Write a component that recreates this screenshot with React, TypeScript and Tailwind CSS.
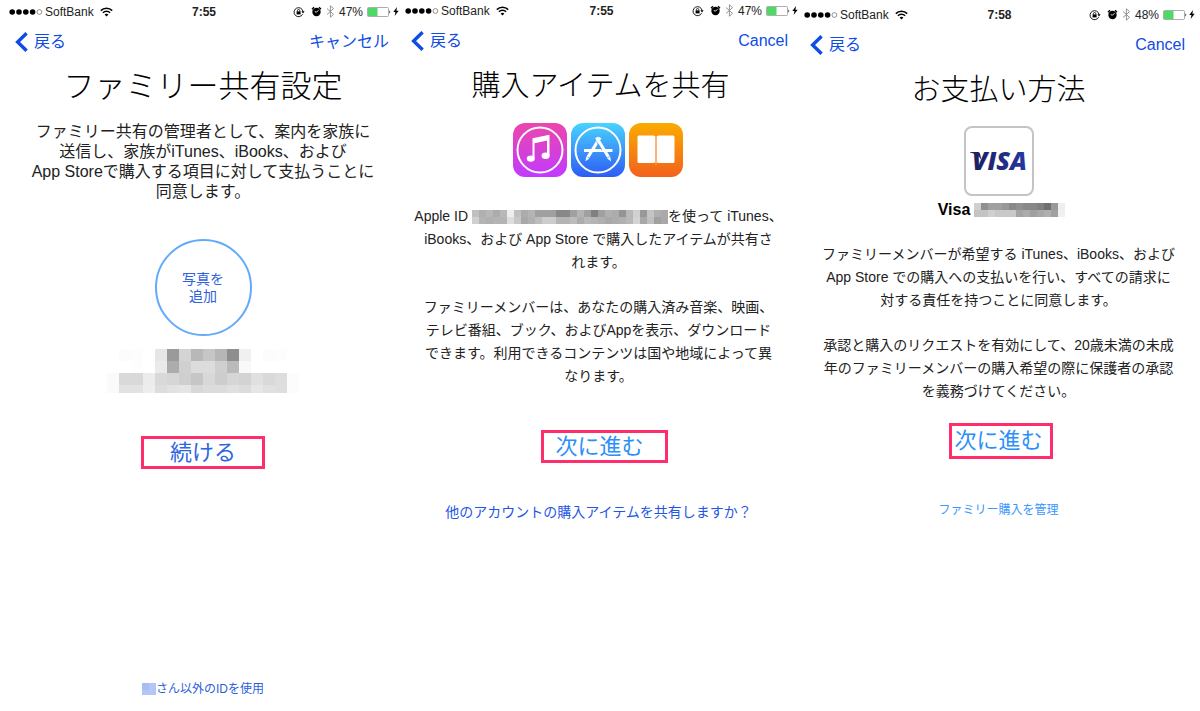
import type { ReactNode } from 'react';
import clsx from 'clsx';

type ScreenProps = {
  time: string;
  battery: string;
  cancelLabel: string;
  title: string;
  titleClass: string;
  className?: string;
  children: ReactNode;
};

type MosaicProps = {
  rows: string[];
  cell: number;
  height?: number;
  className?: string;
};

// Each row is a list of two-digit grey levels
const nameMosaic = [
  'ff fc fd ff e6 9a d4 b8 c6 b6 8e f0 ff fc fd ff',
  'ff ff fd ff ea ac d0 dc dc cf ba f9 ff ff ff ff',
  'fa d9 d9 ec d9 d6 cf c6 d8 cd d6 d3 e0 d9 dd fc',
  'fa e2 e2 ee dd e2 e5 d8 dc dc e0 dc e6 e0 de fc',
];

const idMosaic = [
  'c0 b0 b8 ac b8 ee c0 ac b4 a0 a0 a0 88 88 a0 b4 a0 80 a0 b0 ac 94 b8 d0 98 c4 b0 aa',
  'd0 b4 b0 b4 b4 de c8 a8 b0 bc cc cc b4 b4 bc ac b8 b4 b0 a8 ac b0 b8 d4 a8 c0 a0 a8',
];

const cardMosaic = [
  'd0 90 a0 a0 98 88 90 88 88 80 70 98 ee',
  'c4 c4 d0 c8 c8 c8 a4 ac a0 a8 b0 a0 f0',
];

function Mosaic({ rows, cell, height = rows.length * cell, className }: MosaicProps) {
  const width = rows[0].split(' ').length * cell;
  return (
    <svg
      width={width}
      height={height}
      viewBox={`0 0 ${width} ${height}`}
      shapeRendering="crispEdges"
      className={className}
      aria-hidden="true"
    >
      {rows.map((row, y) =>
        row.split(' ').map((grey, x) => (
          <rect
            key={`${x}-${y}`}
            x={x * cell}
            y={y * cell}
            width={cell}
            height={cell}
            fill={`#${grey}${grey}${grey}`}
          />
        ))
      )}
    </svg>
  );
}

function SignalDots() {
  return (
    <svg width="34" height="8" viewBox="0 0 34 8" aria-hidden="true">
      <circle cx="3.2" cy="4" r="2.8" />
      <circle cx="10" cy="4" r="2.8" />
      <circle cx="16.8" cy="4" r="2.8" />
      <circle cx="23.6" cy="4" r="2.8" />
      <circle cx="30.4" cy="4" r="2.4" fill="none" stroke="#666" strokeWidth="0.7" />
    </svg>
  );
}

function WifiIcon() {
  return (
    <svg width="13" height="10" viewBox="0 0 13 10" fill="none" stroke="#000" strokeWidth="1.5" aria-hidden="true">
      <path d="M0.8 3.6a8 8 0 0 1 11.4 0" />
      <path d="M2.9 5.8a5.1 5.1 0 0 1 7.2 0" />
      <path d="M6.5 9.6 4.6 7.6a2.7 2.7 0 0 1 3.8 0z" fill="#000" stroke="none" />
    </svg>
  );
}

function LockIcon() {
  return (
    <svg width="12" height="12" viewBox="0 0 12 12" fill="none" stroke="#000" aria-hidden="true">
      <path d="M9.6 8.2A4.5 4.5 0 1 1 10 5.4" strokeWidth="0.9" />
      <path d="M8.4 5.2h3.2L10 7.4z" fill="#000" stroke="none" />
      <rect x="3.6" y="5.4" width="4" height="3" fill="#000" stroke="none" />
      <path d="M4.4 5.6V4.7a1.2 1.2 0 0 1 2.4 0v0.9" strokeWidth="0.8" />
    </svg>
  );
}

function AlarmIcon() {
  return (
    <svg width="11" height="11" viewBox="0 0 11 11" aria-hidden="true">
      <circle cx="5.5" cy="6" r="4.2" />
      <path d="M1 3.2 3 1.300M10 3.200 8 1.300" stroke="#000" strokeWidth="1.4" />
      <path d="M5.500 6.200 7.500 4.200M5.500 6.200 3.800 5.600" stroke="#fff" strokeWidth="0.9" />
    </svg>
  );
}

function BluetoothIcon() {
  return (
    <svg width="9" height="13" viewBox="0 0 9 13" fill="none" stroke="#888" strokeWidth="0.9" aria-hidden="true">
      <path d="M1 3.5 7.5 9.4 4.4 12.2V0.8L7.5 3.6 1 9.5" />
    </svg>
  );
}

function BatteryIcon() {
  return (
    <svg width="24" height="10" viewBox="0 0 24 10" aria-hidden="true">
      <rect x="0.5" y="0.5" width="21" height="9" rx="1" fill="#fff" stroke="#999" strokeWidth="0.8" />
      <rect x="1" y="1" width="9.5" height="8" fill="#4cd964" />
      <path d="M22.3 3.6a1.5 1.5 0 0 1 0 2.8z" fill="#333" />
    </svg>
  );
}

function BoltIcon() {
  return (
    <svg width="6" height="9" viewBox="0 0 6 9" aria-hidden="true">
      <path d="M4 0 0.3 5h2.2L1.6 9 5.7 3.8H3.4z" />
    </svg>
  );
}

function StatusBar({ time, battery }: { time: string; battery: string }) {
  return (
    <div className="grid h-[21px] grid-cols-[1fr_auto_1fr] items-center pr-0.5 pl-1 text-[12px] leading-5 text-[#222]">
      <div className="flex items-center">
        <SignalDots />
        <span className="ml-0.5">SoftBank</span>
        <span className="ml-1.5">
          <WifiIcon />
        </span>
      </div>
      <span className="font-bold">{time}</span>
      <div className="flex items-center justify-end">
        <LockIcon />
        <span className="ml-1.5">
          <AlarmIcon />
        </span>
        <span className="ml-1">
          <BluetoothIcon />
        </span>
        <span className="ml-1">{battery}</span>
        <span className="ml-1">
          <BatteryIcon />
        </span>
        <span className="ml-0.5">
          <BoltIcon />
        </span>
      </div>
    </div>
  );
}

function Screen({ time, battery, cancelLabel, title, titleClass, className, children }: ScreenProps) {
  return (
    <section className={clsx('flex flex-col', className)}>
      <StatusBar time={time} battery={battery} />
      <nav className="flex h-10 items-center justify-between pr-3 pl-2.5 text-base text-[#0f4ce4]">
        <button type="button" className="flex items-center gap-1.5">
          <svg width="13" height="20" viewBox="0 0 13 20" fill="none" stroke="#0f4ce4" strokeWidth="3.4" aria-hidden="true">
            <path d="M11.6 1.200 2.600 10l9 8.800" />
          </svg>
          戻る
        </button>
        <button type="button">{cancelLabel}</button>
      </nav>
      <h1 className={clsx('text-center leading-[50px] font-light text-black', titleClass)}>{title}</h1>
      {children}
    </section>
  );
}

function MusicAppIcon() {
  return (
    <svg width="54" height="54" viewBox="0 0 54 54" role="img" aria-label="iTunes">
      <defs>
        <linearGradient id="music" x1="0" y1="0" x2="0" y2="1">
          <stop offset="0" stopColor="#ec46ab" />
          <stop offset="1" stopColor="#c23aff" />
        </linearGradient>
      </defs>
      <rect width="54" height="54" rx="12" fill="url(#music)" />
      <circle cx="27" cy="27" r="22.5" fill="none" stroke="#fff" strokeWidth="2" />
      <path d="M19.500 15.300 36.500 11.800V17L21.500 20.200V35h-2zM34 16h2.500v16.500H34z" fill="#fff" />
      <ellipse cx="17.800" cy="35.600" rx="4" ry="3.200" fill="#fff" />
      <ellipse cx="32.600" cy="32.800" rx="4" ry="3.200" fill="#fff" />
    </svg>
  );
}

function StoreAppIcon() {
  return (
    <svg width="54" height="54" viewBox="0 0 54 54" role="img" aria-label="App Store">
      <defs>
        <linearGradient id="store" x1="0" y1="0" x2="0" y2="1">
          <stop offset="0" stopColor="#48d3ff" />
          <stop offset="1" stopColor="#2d5cf4" />
        </linearGradient>
      </defs>
      <rect width="54" height="54" rx="12" fill="url(#store)" />
      <circle cx="27" cy="27" r="22.5" fill="none" stroke="#fff" strokeWidth="2" />
      <g stroke="#fff" fill="none">
        <path d="M13 27.500h28.500" strokeWidth="3" />
        <path d="M29 14.500 17 34" strokeWidth="3.200" />
        <path d="M25.500 14.500 37.500 34" strokeWidth="3.200" />
      </g>
      <path d="M15.300 33.600 18.400 35.400 14.400 38.200zM36.100 35.400 39.200 33.600 40 38.200z" fill="#fff" />
      <path d="M25.400 18.400 31 27.500" stroke="#3f9bfa" strokeWidth="0.7" />
    </svg>
  );
}

function BooksAppIcon() {
  return (
    <svg width="54" height="54" viewBox="0 0 54 54" role="img" aria-label="iBooks">
      <defs>
        <linearGradient id="books" x1="0" y1="0" x2="0" y2="1">
          <stop offset="0" stopColor="#fbab00" />
          <stop offset="1" stopColor="#f2611d" />
        </linearGradient>
      </defs>
      <rect width="54" height="54" rx="12" fill="url(#books)" />
      <path d="M26 13h2v26.500L27 42l-1-2.500z" fill="#fdb27a" />
      <rect x="8.500" y="12.500" width="17.500" height="27.500" rx="1.500" fill="#fff" />
      <rect x="28" y="12.500" width="17.500" height="27.500" rx="1.500" fill="#fff" />
    </svg>
  );
}

function VisaCard() {
  return (
    <div className="mx-auto mt-[11px] flex size-[70px] items-center justify-center rounded-lg border-2 border-[#c4c4c4]">
      <svg width="66" height="48" viewBox="0 0 66 48" role="img" aria-label="Visa">
        <defs>
          <linearGradient id="visa" x1="0" y1="0" x2="1" y2="0">
            <stop offset="0" stopColor="#1a1f5e" />
            <stop offset="1" stopColor="#2438a0" />
          </linearGradient>
        </defs>
        <path d="M4 15h7.500c1.500 0 2.400.8 2.700 2.200L15.500 23C13.500 19 9 16.300 4 15.400z" fill="#1d2568" />
        <text
          x="6"
          y="33"
          fill="url(#visa)"
          fontFamily="'Open Sans', sans-serif"
          fontSize="25"
          fontStyle="italic"
          fontWeight="800"
        >
          VISA
        </text>
      </svg>
    </div>
  );
}

export default function App() {
  return (
    <main
      lang="ja"
      className="grid grid-cols-[396fr_399fr_397fr] bg-white pr-[3px] pb-3 pl-[5px] font-['Liberation_Sans','Noto_Sans_CJK_JP',sans-serif] text-[#222]"
    >
      <Screen
        time="7:55"
        battery="47%"
        cancelLabel="キャンセル"
        title="ファミリー共有設定"
        titleClass="text-[31px]"
        className="pt-px"
      >
        <p className="mt-2.5 text-center text-base leading-5 whitespace-nowrap">
          ファミリー共有の管理者として、案内を家族に
          <br />
          送信し、家族がiTunes、iBooks、および
          <br />
          App Storeで購入する項目に対して支払うことに
          <br />
          同意します。
        </p>
        <button
          type="button"
          className="mx-auto mt-[37px] size-[97px] rounded-full border-2 border-[#62aafb] text-sm leading-[17px] text-[#2f62dc]"
        >
          写真を
          <br />
          追加
        </button>
        <Mosaic rows={nameMosaic} cell={12} height={44} className="mx-auto mt-[13px]" />
        <button
          type="button"
          className="mx-auto mt-[43px] h-[33px] w-[124px] border-3 border-[#ff2d6c] text-[22px] leading-6 text-[#2f66e0]"
        >
          続ける
        </button>
        <a href="#other-id" className="mx-auto mt-[210px] flex items-center text-[12px] leading-5 text-[#2c60dc]">
          <svg width="14" height="12" viewBox="0 0 14 12" aria-hidden="true">
            <rect width="14" height="12" fill="#b4c6f6" />
            <rect width="7" height="7" fill="#a9bdf4" />
          </svg>
          さん以外のIDを使用
        </a>
      </Screen>

      <Screen
        time="7:55"
        battery="47%"
        cancelLabel="Cancel"
        title="購入アイテムを共有"
        titleClass="text-[29px]"
      >
        <div className="mt-3 flex justify-center gap-1 pr-1.5">
          <MusicAppIcon />
          <StoreAppIcon />
          <BooksAppIcon />
        </div>
        <p className="mt-[28px] pr-1 text-center text-sm leading-[23px] whitespace-nowrap">
          Apple ID <Mosaic rows={idMosaic} cell={7} className="inline-block align-middle" />
          を使って iTunes、
          <br />
          iBooks、および App Store で購入したアイテムが共有さ
          <br />
          れます。
        </p>
        <p className="mt-[22px] pr-1 text-center text-sm leading-[23px] whitespace-nowrap">
          ファミリーメンバーは、あなたの購入済み音楽、映画、
          <br />
          テレビ番組、ブック、およびAppを表示、ダウンロード
          <br />
          できます。利用できるコンテンツは国や地域によって異
          <br />
          なります。
        </p>
        <button
          type="button"
          className="mt-[42px] ml-2 h-[33px] w-[127px] self-center border-3 border-[#ff2d6c] pr-2.5 text-[22px] leading-6 text-[#2b8ff8]"
        >
          次に進む
        </button>
        <a href="#other-account" className="mx-auto mt-[39px] pr-1 text-sm leading-5 text-[#1f57e4]">
          他のアカウントの購入アイテムを共有しますか？
        </a>
      </Screen>

      <Screen
        time="7:58"
        battery="48%"
        cancelLabel="Cancel"
        title="お支払い方法"
        titleClass="text-[29px]"
        className="pt-1"
      >
        <VisaCard />
        <div className="mt-0.5 ml-1.5 flex items-center justify-center gap-1 leading-6">
          <strong className="text-base leading-6 font-bold text-black">Visa</strong>
          <Mosaic rows={cardMosaic} cell={7} />
        </div>
        <p className="mt-[21px] text-center text-sm leading-[23px] whitespace-nowrap">
          ファミリーメンバーが希望する iTunes、iBooks、および
          <br />
          App Store での購入への支払いを行い、すべての請求に
          <br />
          対する責任を持つことに同意します。
        </p>
        <p className="mt-[22px] text-center text-sm leading-[23px] whitespace-nowrap">
          承認と購入のリクエストを有効にして、20歳未満の未成
          <br />
          年のファミリーメンバーの購入希望の際に保護者の承認
          <br />
          を義務づけてください。
        </p>
        <button
          type="button"
          className="mt-5 ml-1 h-9 w-[104px] self-center border-3 border-[#ff2d6c] pr-1 text-[22px] leading-6 text-[#2b8ff8]"
        >
          次に進む
        </button>
        <a href="#manage" className="mx-auto mt-[41px] text-[12px] leading-5 text-[#3a96fb]">
          ファミリー購入を管理
        </a>
      </Screen>
    </main>
  );
}
